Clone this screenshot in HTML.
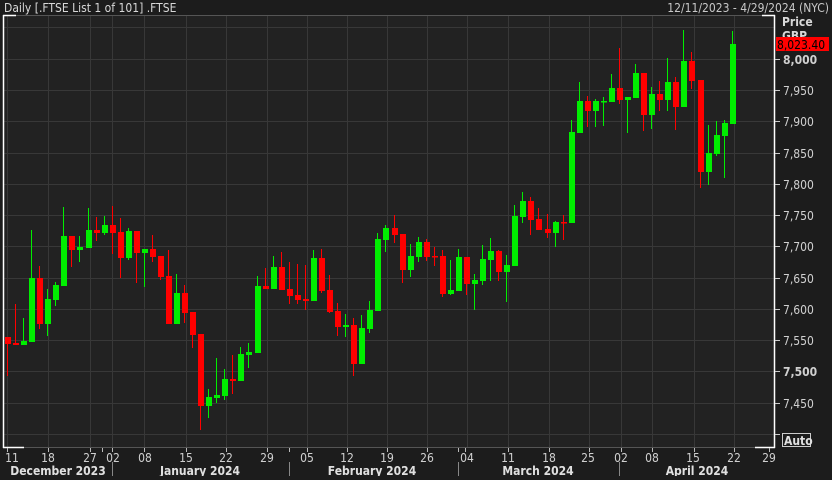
<!DOCTYPE html>
<html><head><meta charset="utf-8"><style>
html,body{margin:0;padding:0;background:#1c1c1c;}
body{width:832px;height:476px;overflow:hidden;font-family:"DejaVu Sans Condensed","Liberation Sans",sans-serif;}
svg text{font-family:"DejaVu Sans Condensed","Liberation Sans Narrow","Liberation Sans",sans-serif;}
</style></head><body>
<svg width="832" height="476" xmlns="http://www.w3.org/2000/svg">
<rect x="0" y="0" width="832" height="476" fill="#1c1c1c"/>
<rect x="3" y="15" width="772" height="432" fill="#222222"/>
<g stroke="#383838" stroke-width="1">
<path d="M3 27.5H775M3 59.5H775M3 90.5H775M3 121.5H775M3 153.5H775M3 184.5H775M3 215.5H775M3 246.5H775M3 278.5H775M3 309.5H775M3 340.5H775M3 371.5H775M3 403.5H775M3 434.5H775"/>
<path d="M7.5 15V447M48.5 15V447M90.5 15V447M112.5 15V447M144.5 15V447M186.5 15V447M226.5 15V447M267.5 15V447M307.5 15V447M347.5 15V447M387.5 15V447M427.5 15V447M467.5 15V447M508.5 15V447M549.5 15V447M589.5 15V447M621.5 15V447M652.5 15V447M694.5 15V447M734.5 15V447"/>
</g>
<g stroke="#555" stroke-width="1"><path d="M3 15.5H775M3 447.5H775"/></g>
<g stroke="#fff" stroke-width="1.5" fill="none">
<path d="M3.5 15V448M774.5 15V448M3 15.5H16M762 15.5H775M3 447.5H24M755 447.5H775"/>
</g>
<g id="c"></g>
<g stroke="#ff0000" stroke-width="1" fill="#ff0000">
<path d="M7.5 337V376M15.5 304V345M39.5 266V329M71.5 236V267M96.5 217V241M112.5 206V254M120.5 218V278M136.5 231V283M152.5 235V262M160.5 256V280M168.5 250V324M184.5 285V323M192.5 312V348M200.5 334V430M232.5 355V394M265.5 268V289M281.5 252V290M289.5 262V304M297.5 264V304M305.5 265V310M321.5 249V293M329.5 275V313M337.5 303V336M353.5 318V376M394.5 215V243M402.5 234V283M426.5 239V261M434.5 247V266M442.5 250V297M466.5 257V295M498.5 250V281M530.5 197V235M538.5 208V230M547.5 214V238M563.5 215V240M587.5 96V127M619.5 48V104M643.5 73V131M659.5 81V111M675.5 77V130M691.5 52V89M700.5 80V188"/>
<g stroke="none">
<rect x="5" y="337" width="6" height="7"/><rect x="13" y="343" width="6" height="2"/><rect x="37" y="278" width="6" height="46"/><rect x="69" y="236" width="6" height="14"/><rect x="94" y="230" width="6" height="3"/><rect x="110" y="225" width="6" height="8"/><rect x="118" y="232" width="6" height="26"/><rect x="134" y="231" width="6" height="22"/><rect x="150" y="249" width="6" height="8"/><rect x="158" y="256" width="6" height="21"/><rect x="166" y="276" width="6" height="48"/><rect x="182" y="293" width="6" height="20"/><rect x="190" y="312" width="6" height="23"/><rect x="198" y="334" width="6" height="72"/><rect x="230" y="379" width="6" height="2"/><rect x="263" y="286" width="6" height="3"/><rect x="279" y="267" width="6" height="23"/><rect x="287" y="289" width="6" height="7"/><rect x="295" y="295" width="6" height="5"/><rect x="303" y="299" width="6" height="2"/><rect x="319" y="258" width="6" height="33"/><rect x="327" y="290" width="6" height="22"/><rect x="335" y="311" width="6" height="16"/><rect x="351" y="325" width="6" height="39"/><rect x="392" y="228" width="6" height="7"/><rect x="400" y="234" width="6" height="36"/><rect x="424" y="242" width="6" height="15"/><rect x="432" y="256" width="6" height="1.5"/><rect x="440" y="256" width="6" height="38"/><rect x="464" y="257" width="6" height="27"/><rect x="496" y="251" width="6" height="21"/><rect x="528" y="201" width="6" height="19"/><rect x="536" y="219" width="6" height="11"/><rect x="545" y="229" width="6" height="4"/><rect x="561" y="222" width="6" height="1.5"/><rect x="585" y="101" width="6" height="10"/><rect x="617" y="88" width="6" height="12"/><rect x="641" y="73" width="6" height="42"/><rect x="657" y="94" width="6" height="6"/><rect x="673" y="82" width="6" height="25"/><rect x="689" y="61" width="6" height="20"/><rect x="698" y="80" width="6" height="92"/>
</g></g>
<g stroke="#00ee00" stroke-width="1" fill="#00ee00">
<path d="M23.5 318V345M31.5 230V342M47.5 289V336M55.5 282V306M63.5 207V286M79.5 236V262M88.5 208V248M104.5 216V235M128.5 228V260M144.5 249V287M176.5 274V324M208.5 389V418M216.5 358V403M224.5 369V400M240.5 347V381M248.5 343V368M257.5 276V353M273.5 256V289M313.5 250V301M345.5 314V337M361.5 315V364M369.5 301V333M377.5 233V311M385.5 225V252M410.5 244V277M418.5 237V262M450.5 260V295M458.5 249V291M474.5 274V310M482.5 245V285M490.5 238V281M506.5 255V302M514.5 205V266M522.5 192V223M555.5 221V247M571.5 120V223M579.5 82V133M595.5 99V127M603.5 97V126M611.5 74V102M627.5 97V133M635.5 64V98M651.5 87V129M667.5 58V111M683.5 30V107M708.5 125V185M716.5 121V156M724.5 120V178M732.5 31V124"/>
<g stroke="none">
<rect x="21" y="341" width="6" height="4"/><rect x="29" y="278" width="6" height="64"/><rect x="45" y="299" width="6" height="25"/><rect x="53" y="285" width="6" height="15"/><rect x="61" y="236" width="6" height="50"/><rect x="77" y="247" width="6" height="3"/><rect x="86" y="230" width="6" height="18"/><rect x="102" y="225" width="6" height="8"/><rect x="126" y="231" width="6" height="27"/><rect x="142" y="249" width="6" height="4"/><rect x="174" y="293" width="6" height="31"/><rect x="206" y="397" width="6" height="9"/><rect x="214" y="395" width="6" height="3"/><rect x="222" y="379" width="6" height="17"/><rect x="238" y="354" width="6" height="27"/><rect x="246" y="352" width="6" height="3"/><rect x="255" y="286" width="6" height="67"/><rect x="271" y="267" width="6" height="22"/><rect x="311" y="258" width="6" height="43"/><rect x="343" y="325" width="6" height="2"/><rect x="359" y="328" width="6" height="36"/><rect x="367" y="310" width="6" height="19"/><rect x="375" y="239" width="6" height="72"/><rect x="383" y="228" width="6" height="12"/><rect x="408" y="256" width="6" height="14"/><rect x="416" y="242" width="6" height="15"/><rect x="448" y="290" width="6" height="4"/><rect x="456" y="257" width="6" height="34"/><rect x="472" y="280" width="6" height="4"/><rect x="480" y="259" width="6" height="22"/><rect x="488" y="251" width="6" height="9"/><rect x="504" y="265" width="6" height="7"/><rect x="512" y="216" width="6" height="50"/><rect x="520" y="201" width="6" height="16"/><rect x="553" y="222" width="6" height="11"/><rect x="569" y="132" width="6" height="91"/><rect x="577" y="101" width="6" height="32"/><rect x="593" y="101" width="6" height="10"/><rect x="601" y="101" width="6" height="1.5"/><rect x="609" y="88" width="6" height="14"/><rect x="625" y="97" width="6" height="3"/><rect x="633" y="73" width="6" height="25"/><rect x="649" y="94" width="6" height="21"/><rect x="665" y="82" width="6" height="18"/><rect x="681" y="61" width="6" height="46"/><rect x="706" y="153" width="6" height="19"/><rect x="714" y="135" width="6" height="19"/><rect x="722" y="123" width="6" height="13"/><rect x="730" y="44" width="6" height="80"/>
</g></g>
<!-- header -->
<text x="4" y="12" font-size="12" fill="#d8d8d8">Daily [.FTSE List 1 of 101] .FTSE</text>
<text x="829" y="12" font-size="12" fill="#c8c8c8" text-anchor="end">12/11/2023 - 4/29/2024 (NYC)</text>
<!-- price axis -->
<text x="782" y="26" font-size="12" fill="#d8d8d8" font-weight="bold">Price</text>
<text x="782" y="40" font-size="12" fill="#d8d8d8" font-weight="bold">GBP</text>
<rect x="776" y="37" width="53" height="14" fill="#ff0000"/>
<text x="777" y="49" font-size="12" fill="#000">8,023.40</text>
<g stroke="#ccc" stroke-width="1"><path d="M775 59.5H780M775 90.5H780M775 121.5H780M775 153.5H780M775 184.5H780M775 215.5H780M775 246.5H780M775 278.5H780M775 309.5H780M775 340.5H780M775 371.5H780M775 403.5H780M775 434.5H780"/></g>
<g font-size="12" fill="#d0d0d0">
<text x="783" y="64" font-weight="bold">8,000</text>
<text x="783" y="95">7,950</text>
<text x="783" y="126">7,900</text>
<text x="783" y="158">7,850</text>
<text x="783" y="189">7,800</text>
<text x="783" y="220">7,750</text>
<text x="783" y="251">7,700</text>
<text x="783" y="283">7,650</text>
<text x="783" y="314">7,600</text>
<text x="783" y="345">7,550</text>
<text x="783" y="376" font-weight="bold">7,500</text>
<text x="783" y="408">7,450</text>
</g>
<rect x="782.5" y="433.5" width="28" height="13" fill="none" stroke="#ccc"/>
<text x="784" y="445" font-size="12" fill="#e0e0e0" font-weight="bold">Auto</text>
<!-- date axis -->
<g stroke="#bbb" stroke-width="1"><path d="M7.5 448V452M48.5 448V452M90.5 448V452M102.5 448V452M112.5 448V452M144.5 448V452M186.5 448V452M226.5 448V452M267.5 448V452M289.5 448V452M307.5 448V452M347.5 448V452M387.5 448V452M427.5 448V452M458.5 448V452M465.5 448V452M508.5 448V452M549.5 448V452M589.5 448V452M621.5 448V452M652.5 448V452M694.5 448V452M734.5 448V452M769.5 448V452"/></g>
<g stroke="#888" stroke-width="1"><path d="M112.5 462V476M289.5 462V476M458.5 462V476M619.5 462V476"/></g>
<g font-size="12" fill="#d0d0d0" text-anchor="middle">
<text x="12" y="462">11</text><text x="48" y="462">18</text><text x="90" y="462">27</text><text x="113" y="462">02</text><text x="145" y="462">08</text><text x="186" y="462">15</text><text x="226" y="462">22</text><text x="267" y="462">29</text><text x="307" y="462">05</text><text x="347" y="462">12</text><text x="387" y="462">19</text><text x="427" y="462">26</text><text x="467" y="462">04</text><text x="508" y="462">11</text><text x="549" y="462">18</text><text x="588" y="462">25</text><text x="621" y="462">02</text><text x="652" y="462">08</text><text x="693" y="462">15</text><text x="734" y="462">22</text><text x="769" y="462">29</text>
</g>
<g font-size="12" fill="#e0e0e0" font-weight="bold" text-anchor="middle">
<text x="58" y="475">December 2023</text>
<text x="200" y="475">January 2024</text>
<text x="372" y="475">February 2024</text>
<text x="538" y="475">March 2024</text>
<text x="697" y="475">April 2024</text>
</g>
</svg>
</body></html>
